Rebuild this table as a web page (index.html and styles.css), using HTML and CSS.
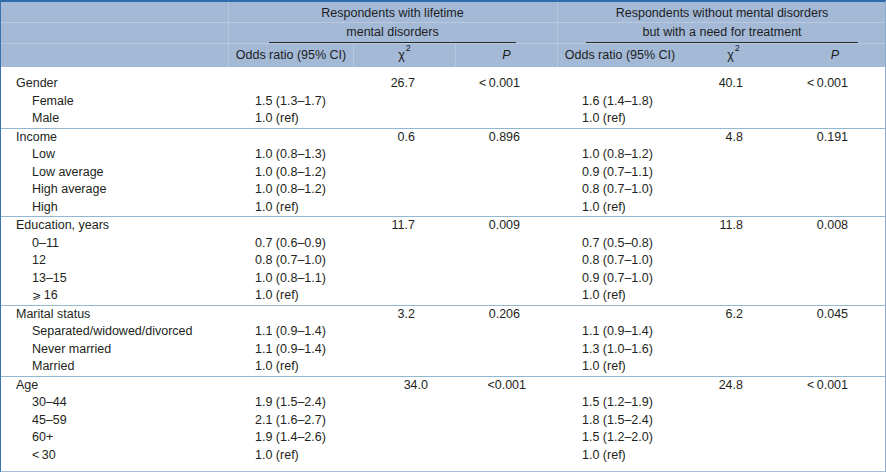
FILE: index.html
```html
<!DOCTYPE html>
<html lang="en">
<head>
<meta charset="utf-8">
<title>Odds ratios table</title>
<link rel="stylesheet" href="styles.css">
</head>
<body>
<div class="frame">
<table class="tbl">
<colgroup>
<col class="w-lab"><col class="w-or"><col class="w-chi"><col class="w-p"><col class="w-or"><col class="w-chi"><col class="w-p2">
</colgroup>
<thead>
<tr class="h1">
<th class="hl"></th>
<th colspan="3" class="grp g1">Respondents with lifetime</th>
<th colspan="3" class="grp g2">Respondents without mental disorders</th>
</tr>
<tr class="h2">
<th class="hl"></th>
<th colspan="3" class="grp g1"><div class="rule">mental disorders</div></th>
<th colspan="3" class="grp g2"><div class="rule">but with a need for treatment</div></th>
</tr>
<tr class="h3">
<th class="hl"></th>
<th class="sub">Odds ratio (95% CI)</th>
<th class="sub">χ<sup>2</sup></th>
<th class="sub"><i>P</i></th>
<th class="sub">Odds ratio (95% CI)</th>
<th class="sub nb">χ<sup>2</sup></th>
<th class="sub nb"><i>P</i></th>
</tr>
</thead>
<tbody>
<tr class="first"><td class="lab">Gender</td><td class="or1"></td><td class="chi">26.7</td><td class="p">&lt;&#8201;0.001</td><td class="or2"></td><td class="chi2">40.1</td><td class="p2">&lt;&#8201;0.001</td></tr>
<tr><td class="lab in">Female</td><td class="or1">1.5 (1.3–1.7)</td><td class="chi"></td><td class="p"></td><td class="or2">1.6 (1.4–1.8)</td><td class="chi2"></td><td class="p2"></td></tr>
<tr><td class="lab in">Male</td><td class="or1">1.0 (ref)</td><td class="chi"></td><td class="p"></td><td class="or2">1.0 (ref)</td><td class="chi2"></td><td class="p2"></td></tr>

<tr class="sec"><td class="lab">Income</td><td class="or1"></td><td class="chi">0.6</td><td class="p">0.896</td><td class="or2"></td><td class="chi2">4.8</td><td class="p2">0.191</td></tr>
<tr><td class="lab in">Low</td><td class="or1">1.0 (0.8–1.3)</td><td class="chi"></td><td class="p"></td><td class="or2">1.0 (0.8–1.2)</td><td class="chi2"></td><td class="p2"></td></tr>
<tr><td class="lab in">Low average</td><td class="or1">1.0 (0.8–1.2)</td><td class="chi"></td><td class="p"></td><td class="or2">0.9 (0.7–1.1)</td><td class="chi2"></td><td class="p2"></td></tr>
<tr><td class="lab in">High average</td><td class="or1">1.0 (0.8–1.2)</td><td class="chi"></td><td class="p"></td><td class="or2">0.8 (0.7–1.0)</td><td class="chi2"></td><td class="p2"></td></tr>
<tr><td class="lab in">High</td><td class="or1">1.0 (ref)</td><td class="chi"></td><td class="p"></td><td class="or2">1.0 (ref)</td><td class="chi2"></td><td class="p2"></td></tr>

<tr class="sec"><td class="lab">Education, years</td><td class="or1"></td><td class="chi">11.7</td><td class="p">0.009</td><td class="or2"></td><td class="chi2">11.8</td><td class="p2">0.008</td></tr>
<tr><td class="lab in">0–11</td><td class="or1">0.7 (0.6–0.9)</td><td class="chi"></td><td class="p"></td><td class="or2">0.7 (0.5–0.8)</td><td class="chi2"></td><td class="p2"></td></tr>
<tr><td class="lab in">12</td><td class="or1">0.8 (0.7–1.0)</td><td class="chi"></td><td class="p"></td><td class="or2">0.8 (0.7–1.0)</td><td class="chi2"></td><td class="p2"></td></tr>
<tr><td class="lab in">13–15</td><td class="or1">1.0 (0.8–1.1)</td><td class="chi"></td><td class="p"></td><td class="or2">0.9 (0.7–1.0)</td><td class="chi2"></td><td class="p2"></td></tr>
<tr><td class="lab in"><span class="math">⩾</span>&#8201;16</td><td class="or1">1.0 (ref)</td><td class="chi"></td><td class="p"></td><td class="or2">1.0 (ref)</td><td class="chi2"></td><td class="p2"></td></tr>

<tr class="sec"><td class="lab">Marital status</td><td class="or1"></td><td class="chi">3.2</td><td class="p">0.206</td><td class="or2"></td><td class="chi2">6.2</td><td class="p2">0.045</td></tr>
<tr><td class="lab in">Separated/widowed/divorced</td><td class="or1">1.1 (0.9–1.4)</td><td class="chi"></td><td class="p"></td><td class="or2">1.1 (0.9–1.4)</td><td class="chi2"></td><td class="p2"></td></tr>
<tr><td class="lab in">Never married</td><td class="or1">1.1 (0.9–1.4)</td><td class="chi"></td><td class="p"></td><td class="or2">1.3 (1.0–1.6)</td><td class="chi2"></td><td class="p2"></td></tr>
<tr><td class="lab in">Married</td><td class="or1">1.0 (ref)</td><td class="chi"></td><td class="p"></td><td class="or2">1.0 (ref)</td><td class="chi2"></td><td class="p2"></td></tr>

<tr class="sec"><td class="lab">Age</td><td class="or1"></td><td class="chi shift-chi">34.0</td><td class="p shift-p">&lt;0.001</td><td class="or2"></td><td class="chi2">24.8</td><td class="p2">&lt;&#8201;0.001</td></tr>
<tr><td class="lab in">30–44</td><td class="or1">1.9 (1.5–2.4)</td><td class="chi"></td><td class="p"></td><td class="or2">1.5 (1.2–1.9)</td><td class="chi2"></td><td class="p2"></td></tr>
<tr><td class="lab in">45–59</td><td class="or1">2.1 (1.6–2.7)</td><td class="chi"></td><td class="p"></td><td class="or2">1.8 (1.5–2.4)</td><td class="chi2"></td><td class="p2"></td></tr>
<tr><td class="lab in">60+</td><td class="or1">1.9 (1.4–2.6)</td><td class="chi"></td><td class="p"></td><td class="or2">1.5 (1.2–2.0)</td><td class="chi2"></td><td class="p2"></td></tr>
<tr class="last"><td class="lab in">&lt;&#8201;30</td><td class="or1">1.0 (ref)</td><td class="chi"></td><td class="p"></td><td class="or2">1.0 (ref)</td><td class="chi2"></td><td class="p2"></td></tr>
</tbody>
</table>
</div>
</body>
</html>
```

FILE: styles.css
```css
html, body {
  margin: 0;
  padding: 0;
  background: #ffffff;
}

body {
  font-family: "Liberation Sans", Arial, "DejaVu Sans", sans-serif;
  font-size: 12.5px;
  color: #231f20;
}

.frame {
  width: 884px;
  border-top: 2px solid #2f6ba8;
  border-left: 1px solid #3a73ae;
  border-right: 1px solid #8eabcd;
  border-bottom: 2px solid #a5bcd8;
}

.tbl {
  width: 884px;
  table-layout: fixed;
  border-collapse: separate;
  border-spacing: 0;
}

.w-lab { width: 227px; }
.w-or { width: 125px; }
.w-chi { width: 102px; }
.w-p { width: 102px; }
.w-p2 { width: 101px; }

thead th {
  background: #a3b9d6;
  font-weight: normal;
  color: #1d1d1f;
  padding: 0;
  text-align: center;
  white-space: nowrap;
}

.h1 th {
  height: 19px;
  line-height: 18px;
  padding-top: 1px;
  border-bottom: 1px solid #b9cae0;
}

.h2 th {
  height: 20px;
  line-height: 19px;
  border-bottom: 1px solid #b9cae0;
}

.h3 th {
  height: 23px;
  line-height: 23px;
}

.grp {
  border-left: 1px solid #b6c8df;
}

.g1 {
  padding-left: 40px !important;
  padding-right: 41px !important;
}

.g2 {
  padding-left: 28px !important;
  padding-right: 27px !important;
}

.rule {
  height: 19px;
  line-height: 19px;
  border-bottom: 1px solid #2a2a2a;
}

.h2 .grp {
  vertical-align: bottom;
}

.sub {
  border-left: 1px solid #b6c8df;
}

.sub.nb {
  border-left-color: #a3b9d6;
}

sup {
  font-size: 9px;
  line-height: 0;
  position: relative;
  top: -3px;
  margin-left: 1px;
}

i {
  font-style: italic;
}

tbody td {
  padding: 0;
  height: 17.5px;
  line-height: 17.5px;
  white-space: nowrap;
  vertical-align: middle;
}

tbody tr.first td {
  padding-top: 8px;
}

tbody tr.sec td {
  border-top: 1px solid #93b6d1;
}

tbody tr.last td {
  padding-bottom: 7px;
}

.lab {
  padding-left: 15px !important;
  text-align: left;
}

.lab.in {
  padding-left: 31px !important;
}

.or1 {
  padding-left: 27px !important;
}

.or2 {
  padding-left: 25px !important;
}

.chi {
  text-align: right;
  padding-right: 40px !important;
}

.chi2 {
  text-align: right;
  padding-right: 41px !important;
}

.p, .p2 {
  text-align: right;
  padding-right: 37px !important;
}

.shift-chi {
  padding-right: 27px !important;
}

.shift-p {
  padding-right: 31px !important;
}

.math {
  font-family: "DejaVu Sans", sans-serif;
  font-size: 11px;
}
```
